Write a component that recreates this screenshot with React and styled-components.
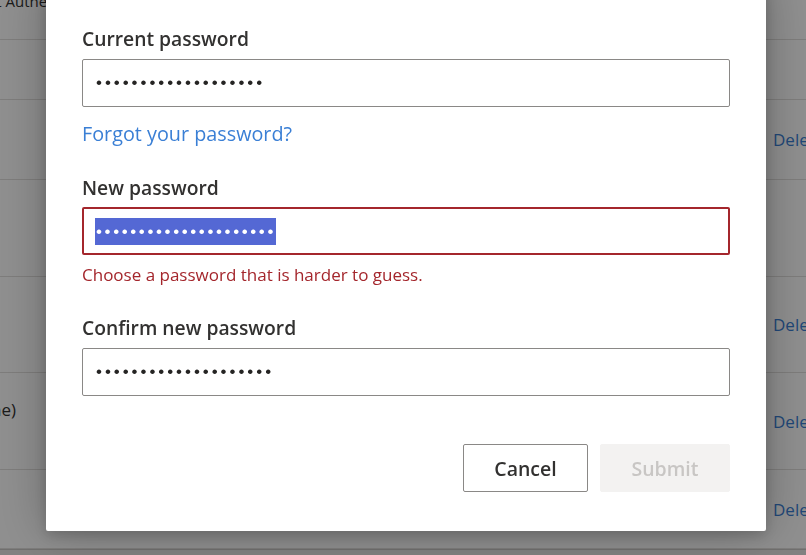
import React from 'react';
import styled, { createGlobalStyle } from 'styled-components';

const GlobalStyle = createGlobalStyle`
  html, body {
    margin: 0;
    padding: 0;
    height: 100%;
    overflow: hidden;
    background: #fff;
  }
  body {
    font-family: "Open Sans", "Noto Sans", sans-serif;
    color: #323130;
  }
`;

// ---- page behind the dialog ----

const Page = styled.div`
  width: 806px;
  height: 555px;
  display: flex;
  flex-direction: column;
  overflow: hidden;
`;

const HeaderRow = styled.div`
  height: 40px;
  flex: none;
  display: flex;
  align-items: flex-start;
  border-bottom: 1px solid #e1dfdd;
  box-sizing: border-box;
`;

const HeaderCell = styled.div`
  width: 80px;
  overflow: hidden;
  white-space: nowrap;
  font-size: 15px;
  line-height: 20px;
  font-weight: 400;
  color: #323130;
  text-indent: -27px;
  margin-top: -9px;
`;

const Row = styled.div`
  height: ${(p) => p.$h}px;
  flex: none;
  display: flex;
  align-items: center;
  border-bottom: 1px solid #e1dfdd;
  box-sizing: border-box;
`;

const LeftCell = styled.div`
  width: 16px;
  overflow: hidden;
  display: flex;
  justify-content: flex-end;
  white-space: nowrap;
  font-size: 17px;
  align-self: flex-start;
  padding-top: ${(p) => p.$top || 0}px;
`;

const Spacer = styled.div`
  flex: 1;
`;

const DeleteLink = styled.a`
  width: 33px;
  overflow: hidden;
  white-space: nowrap;
  font-size: 17px;
  color: #3a7fd5;
  text-decoration: none;
`;

const Footer = styled.div`
  flex: 1;
  background: #e8e7e6;
  border-top: 1px solid #c8c6c4;
`;

// ---- overlay + dialog ----

const Overlay = styled.div`
  position: fixed;
  inset: 0;
  background: rgba(0, 0, 0, 0.44);
`;

const Dialog = styled.div`
  position: absolute;
  left: 46px;
  top: -20px;
  width: 720px;
  box-sizing: border-box;
  padding: 45px 36px 39px;
  background: #fff;
  border-radius: 2px;
  box-shadow: 0 0 50px rgba(0, 0, 0, 0.28), 0 4px 14px rgba(0, 0, 0, 0.18);
  display: flex;
  flex-direction: column;
`;

const Label = styled.div`
  font-size: 19.3px;
  line-height: 28px;
  font-weight: 600;
  color: #323130;
  margin-top: ${(p) => p.$gap || 0}px;
  margin-bottom: ${(p) => p.$below || 6}px;
`;

const Field = styled.div`
  height: 48px;
  box-sizing: border-box;
  border: ${(p) => (p.$error ? '2px solid #a4262c' : '1px solid #8a8886')};
  border-radius: 2px;
  display: flex;
  align-items: center;
  padding-left: ${(p) => (p.$error ? 11 : 13)}px;
`;

const Dots = styled.span`
  font-family: "Liberation Sans", Arial, sans-serif;
  font-size: 17px;
  letter-spacing: 2.95px;
  color: #252423;
`;

const Selected = styled.span`
  font-family: "Liberation Sans", Arial, sans-serif;
  font-size: 17px;
  letter-spacing: 2.62px;
  line-height: 27px;
  padding-left: 1px;
  background: #5468d4;
  color: #fff;
`;

const ForgotLink = styled.a`
  margin-top: 15px;
  font-size: 19.8px;
  line-height: 24px;
  color: #3a7fd5;
  text-decoration: none;
  align-self: flex-start;
`;

const ErrorText = styled.div`
  margin-top: 9px;
  font-size: 17px;
  line-height: 22px;
  color: #a4262c;
`;

const Actions = styled.div`
  margin-top: 48px;
  display: flex;
  justify-content: flex-end;
  gap: 12px;
`;

const Button = styled.button`
  height: 48px;
  width: ${(p) => p.$w}px;
  box-sizing: border-box;
  border-radius: 2px;
  font-family: "Open Sans", "Noto Sans", sans-serif;
  font-size: 19.5px;
  font-weight: 600;
  border: 1px solid ${(p) => (p.$disabled ? '#f3f2f1' : '#8a8886')};
  background: ${(p) => (p.$disabled ? '#f3f2f1' : '#fff')};
  color: ${(p) => (p.$disabled ? '#c8c6c4' : '#323130')};
  padding: 0;
`;

const dots = (n) => '\u2022'.repeat(n);

export default function App() {
  return (
    <>
      <GlobalStyle />
      <Page>
        <HeaderRow>
          <HeaderCell>Last Authentication</HeaderCell>
        </HeaderRow>
        <Row $h={60} />
        <Row $h={80}>
          <Spacer />
          <DeleteLink>Delete</DeleteLink>
        </Row>
        <Row $h={97} />
        <Row $h={96}>
          <Spacer />
          <DeleteLink>Delete</DeleteLink>
        </Row>
        <Row $h={97}>
          <LeftCell $top={25}>(default phone)</LeftCell>
          <Spacer />
          <DeleteLink>Delete</DeleteLink>
        </Row>
        <Row $h={79}>
          <Spacer />
          <DeleteLink>Delete</DeleteLink>
        </Row>
        <Footer />
      </Page>

      <Overlay>
        <Dialog role="dialog" aria-label="Change password">
          <Label>Current password</Label>
          <Field>
            <Dots>{dots(19)}</Dots>
          </Field>
          <ForgotLink href="#">Forgot your password?</ForgotLink>

          <Label $gap={28} $below={5}>New password</Label>
          <Field $error>
            <Selected>{dots(21)}</Selected>
          </Field>
          <ErrorText>Choose a password that is harder to guess.</ErrorText>

          <Label $gap={28}>Confirm new password</Label>
          <Field>
            <Dots>{dots(20)}</Dots>
          </Field>

          <Actions>
            <Button $w={125}>Cancel</Button>
            <Button $w={130} $disabled>Submit</Button>
          </Actions>
        </Dialog>
      </Overlay>
    </>
  );
}
